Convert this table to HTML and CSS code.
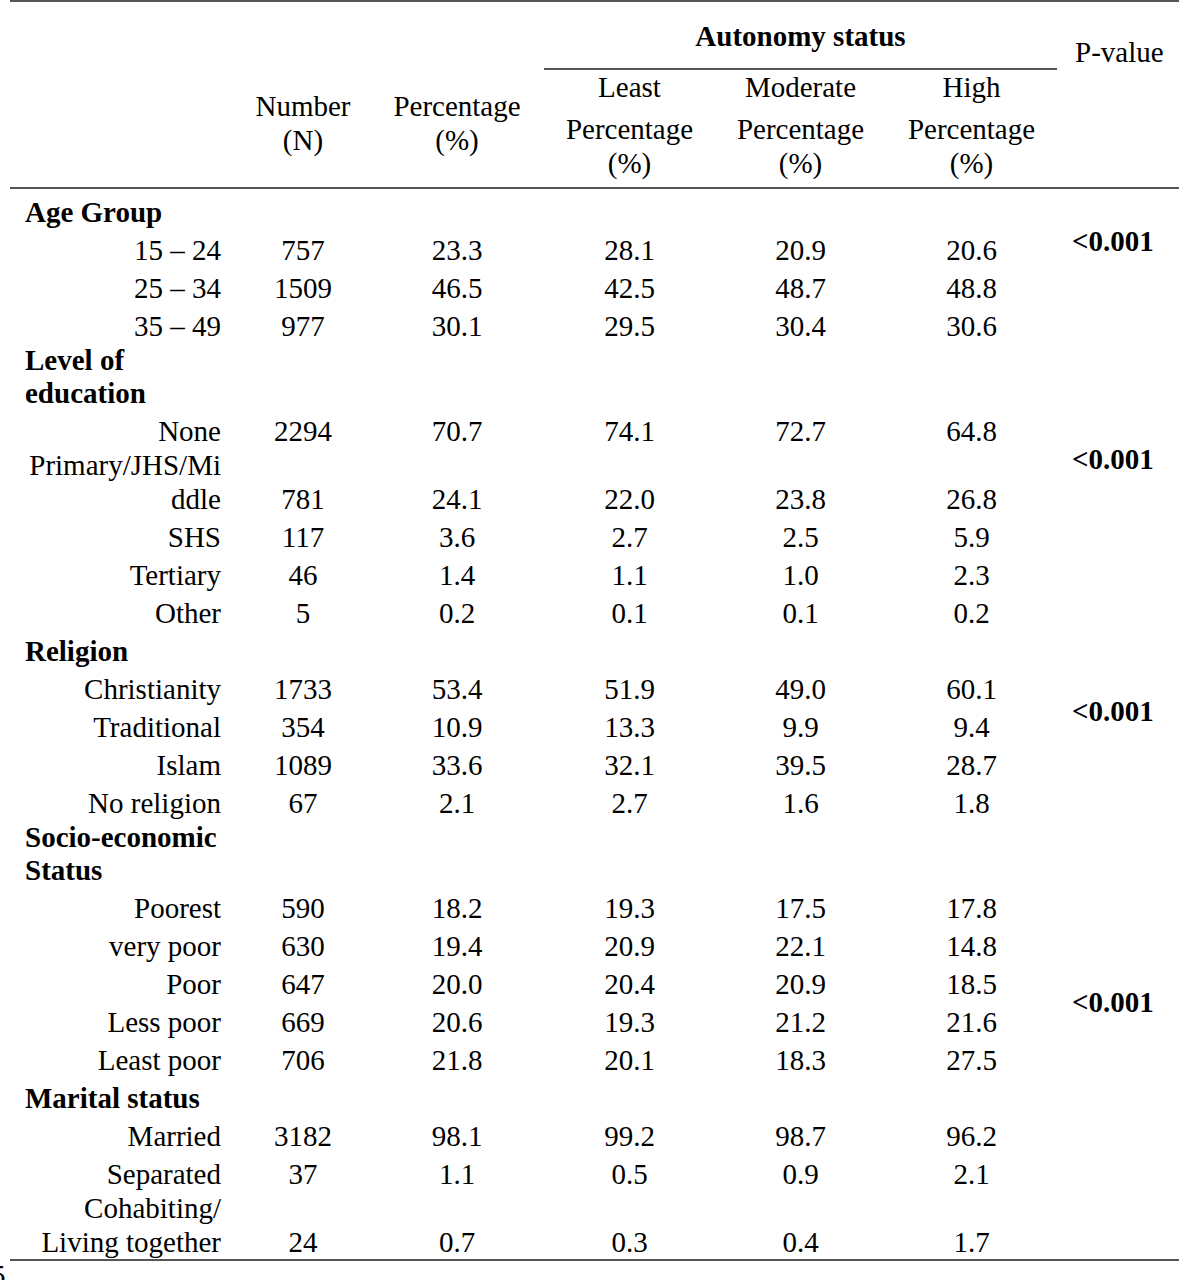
FILE: index.html
```html
<!DOCTYPE html>
<html lang="en">
<head>
    <meta charset="utf-8">
    <meta name="viewport" content="width=device-width, initial-scale=1.0">
    <title>Autonomy status by background characteristics</title>
    <link rel="stylesheet" href="styles.css">
</head>
<body>
    <table class="stats">
        <colgroup>
            <col class="col-label">
            <col class="col-number">
            <col class="col-percent">
            <col class="col-level">
            <col class="col-level">
            <col class="col-level">
            <col class="col-p">
        </colgroup>
        <thead>
            <tr class="head-top">
                <th rowspan="2"></th>
                <th rowspan="2" class="head-count">Number<br>(N)</th>
                <th rowspan="2" class="head-count">Percentage<br>(%)</th>
                <th colspan="3" class="head-group">Autonomy status</th>
                <th class="head-p">P-value</th>
            </tr>
            <tr class="head-sub">
                <th><span class="level-name">Least</span>Percentage<br>(%)</th>
                <th><span class="level-name">Moderate</span>Percentage<br>(%)</th>
                <th><span class="level-name">High</span>Percentage<br>(%)</th>
                <th></th>
            </tr>
        </thead>
        <tbody>
            <!-- Age group -->
            <tr class="first">
                <td class="cat">Age Group</td>
                <td></td><td></td><td></td><td></td><td></td>
                <td rowspan="4" class="pval p-age">&lt;0.001</td>
            </tr>
            <tr><td class="sub">15 – 24</td><td>757</td><td>23.3</td><td>28.1</td><td>20.9</td><td>20.6</td></tr>
            <tr><td class="sub">25 – 34</td><td>1509</td><td>46.5</td><td>42.5</td><td>48.7</td><td>48.8</td></tr>
            <tr><td class="sub">35 – 49</td><td>977</td><td>30.1</td><td>29.5</td><td>30.4</td><td>30.6</td></tr>

            <!-- Level of education -->
            <tr class="wrap">
                <td class="cat">Level of<br>education</td>
                <td></td><td></td><td></td><td></td><td></td>
                <td rowspan="6" class="pval p-edu">&lt;0.001</td>
            </tr>
            <tr><td class="sub">None</td><td>2294</td><td>70.7</td><td>74.1</td><td>72.7</td><td>64.8</td></tr>
            <tr class="wrap"><td class="sub">Primary/JHS/Mi<br>ddle</td><td>781</td><td>24.1</td><td>22.0</td><td>23.8</td><td>26.8</td></tr>
            <tr><td class="sub">SHS</td><td>117</td><td>3.6</td><td>2.7</td><td>2.5</td><td>5.9</td></tr>
            <tr><td class="sub">Tertiary</td><td>46</td><td>1.4</td><td>1.1</td><td>1.0</td><td>2.3</td></tr>
            <tr><td class="sub">Other</td><td>5</td><td>0.2</td><td>0.1</td><td>0.1</td><td>0.2</td></tr>

            <!-- Religion -->
            <tr>
                <td class="cat">Religion</td>
                <td></td><td></td><td></td><td></td><td></td>
                <td rowspan="5" class="pval p-rel">&lt;0.001</td>
            </tr>
            <tr><td class="sub">Christianity</td><td>1733</td><td>53.4</td><td>51.9</td><td>49.0</td><td>60.1</td></tr>
            <tr><td class="sub">Traditional</td><td>354</td><td>10.9</td><td>13.3</td><td>9.9</td><td>9.4</td></tr>
            <tr><td class="sub">Islam</td><td>1089</td><td>33.6</td><td>32.1</td><td>39.5</td><td>28.7</td></tr>
            <tr><td class="sub">No religion</td><td>67</td><td>2.1</td><td>2.7</td><td>1.6</td><td>1.8</td></tr>

            <!-- Socio-economic status -->
            <tr class="wrap">
                <td class="cat">Socio-economic<br>Status</td>
                <td></td><td></td><td></td><td></td><td></td>
                <td rowspan="6" class="pval p-ses">&lt;0.001</td>
            </tr>
            <tr><td class="sub">Poorest</td><td>590</td><td>18.2</td><td>19.3</td><td>17.5</td><td>17.8</td></tr>
            <tr><td class="sub">very poor</td><td>630</td><td>19.4</td><td>20.9</td><td>22.1</td><td>14.8</td></tr>
            <tr><td class="sub">Poor</td><td>647</td><td>20.0</td><td>20.4</td><td>20.9</td><td>18.5</td></tr>
            <tr><td class="sub">Less poor</td><td>669</td><td>20.6</td><td>19.3</td><td>21.2</td><td>21.6</td></tr>
            <tr><td class="sub">Least poor</td><td>706</td><td>21.8</td><td>20.1</td><td>18.3</td><td>27.5</td></tr>

            <!-- Marital status -->
            <tr>
                <td class="cat">Marital status</td>
                <td></td><td></td><td></td><td></td><td></td>
                <td rowspan="4" class="pval"></td>
            </tr>
            <tr><td class="sub">Married</td><td>3182</td><td>98.1</td><td>99.2</td><td>98.7</td><td>96.2</td></tr>
            <tr><td class="sub">Separated</td><td>37</td><td>1.1</td><td>0.5</td><td>0.9</td><td>2.1</td></tr>
            <tr class="wrap"><td class="sub">Cohabiting/<br>Living together</td><td>24</td><td>0.7</td><td>0.3</td><td>0.4</td><td>1.7</td></tr>
        </tbody>
    </table>

    <div class="page-num">5</div>
</body>
</html>
```

FILE: styles.css
```css
body {
    margin: 0;
    font-family: "Liberation Serif", "Times New Roman", serif;
    font-size: 29px;
    color: #000;
    background: #fff;
}

.stats {
    margin-left: 10px;
    width: 1169px;
    table-layout: fixed;
    border-collapse: collapse;
    border-top: 2px solid #555;
    border-bottom: 2px solid #555;
}

.col-label { width: 220px; }
.col-number { width: 146px; }
.col-percent { width: 168px; }
.col-level { width: 171px; }
.col-p { width: 122px; }

.stats th,
.stats td {
    padding: 0;
    line-height: 33.5px;
    font-weight: normal;
    text-align: center;
    vertical-align: bottom;
}

/* header */
.stats thead {
    border-bottom: 2px solid #555;
}

.head-top {
    height: 68px;
}

.stats .head-group {
    font-weight: bold;
    vertical-align: middle;
    padding-top: 3px;
    border-bottom: 2px solid #555;
}

.stats .head-p {
    text-align: left;
    padding-left: 18px;
}

.stats .head-count {
    padding-bottom: 30px;
}

.head-sub th {
    padding-top: 1px;
    padding-bottom: 7px;
}

.level-name {
    display: block;
    margin-bottom: 8.5px;
}

/* percentage column sits a little left of its cell centre */
.stats tbody td:nth-child(3),
.stats .head-top th:nth-child(3) {
    padding-right: 6px;
}

/* body rows */
.stats td {
    padding-top: 4.5px;
}

.stats .wrap td {
    padding-top: 0.5px;
}

.stats tr.first td {
    padding-top: 6.5px;
}

.stats td.cat {
    font-weight: bold;
    text-align: left;
    padding-left: 15px;
}

.stats td.sub {
    text-align: right;
    padding-right: 9px;
}

.stats td.pval {
    font-weight: bold;
    text-align: left;
    vertical-align: top;
    padding-left: 15px;
}

.stats td.pval.p-age { padding-top: 36px; }
.stats td.pval.p-edu { padding-top: 100px; }
.stats td.pval.p-rel { padding-top: 65px; }
.stats td.pval.p-ses { padding-top: 166px; }

.page-num {
    margin-left: -9px;
    line-height: 29px;
}
```
